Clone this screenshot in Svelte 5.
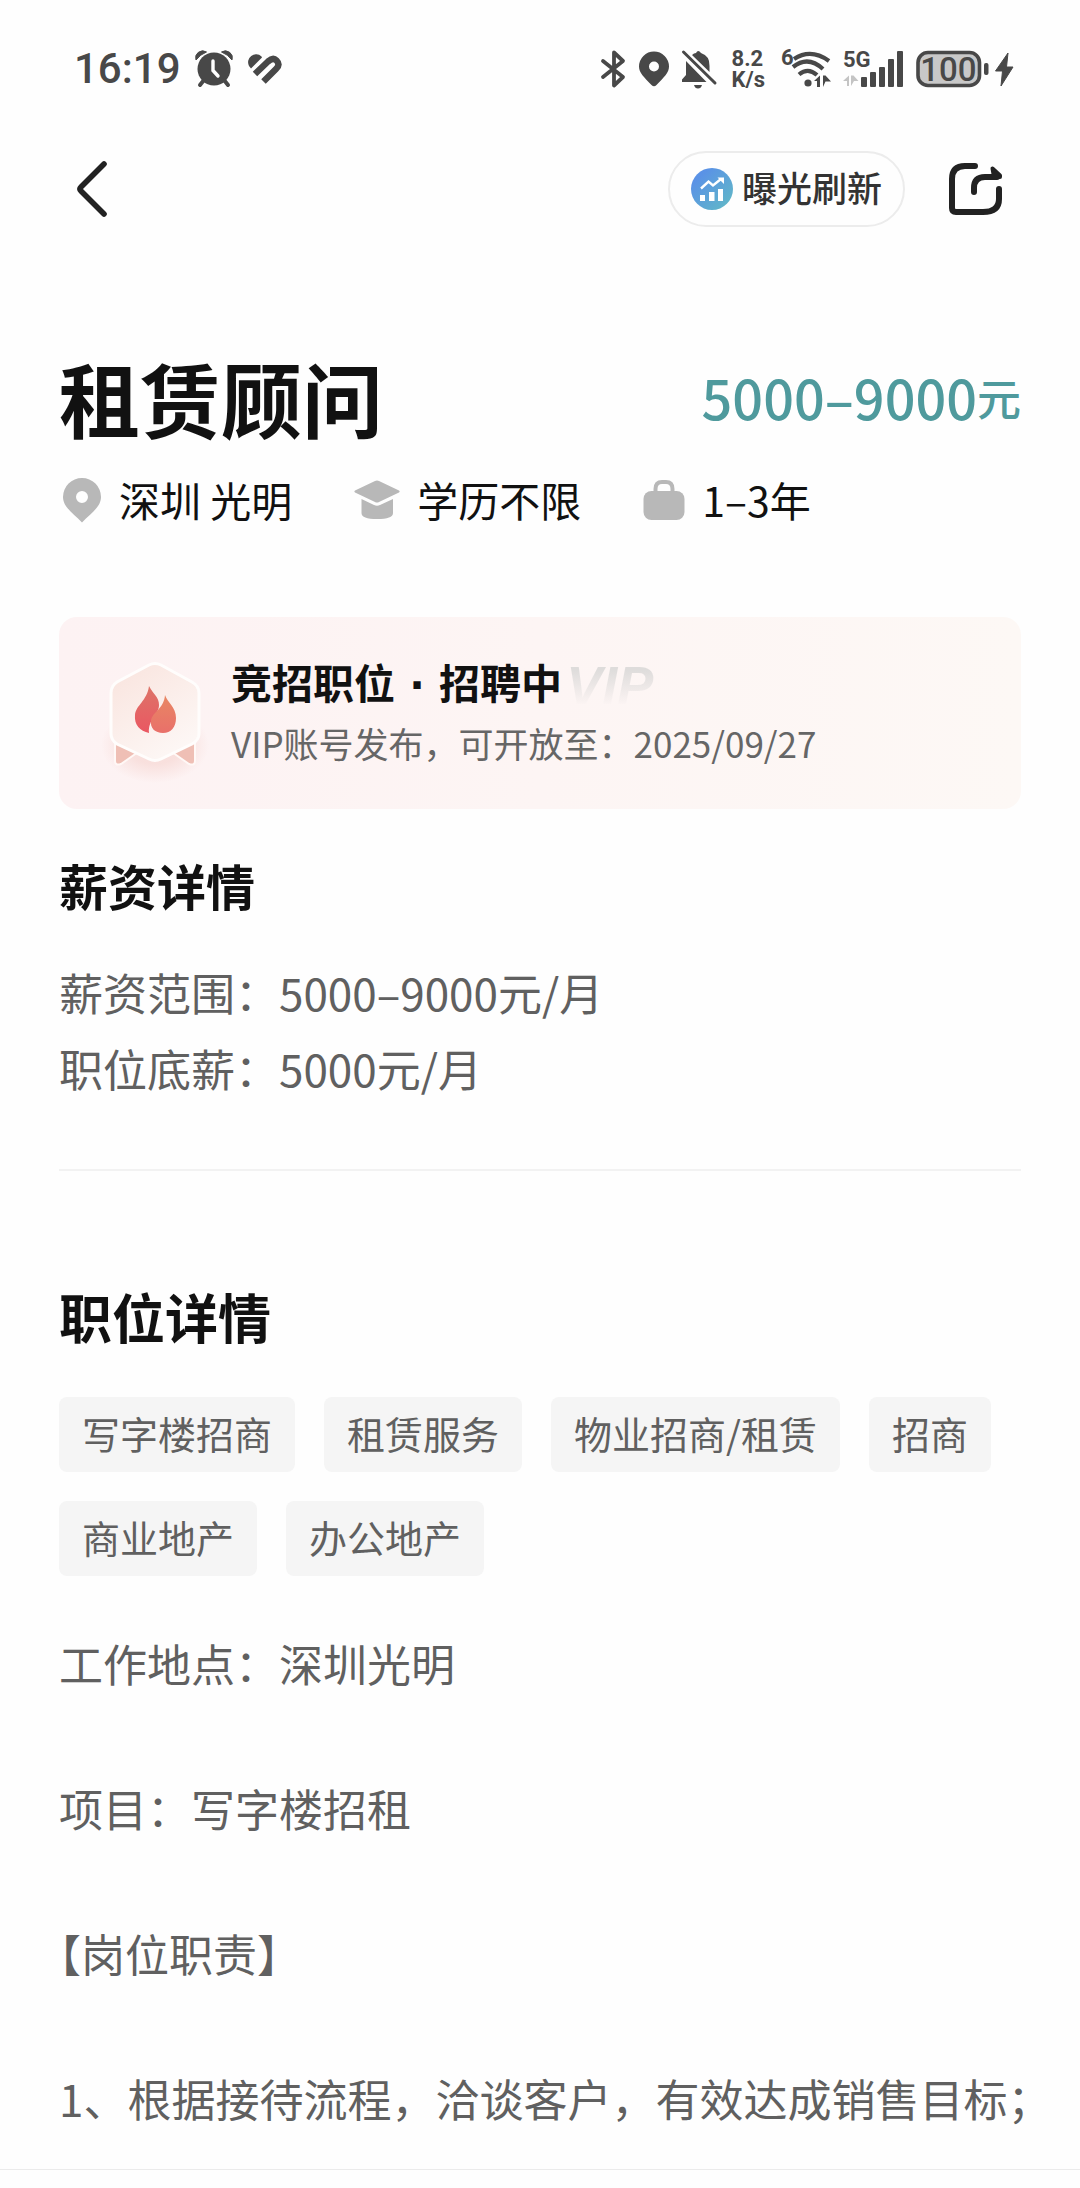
<script lang="ts">
  const job = {
    title: '租赁顾问',
    pay: '5000–9000',
    unit: '元',
    city: '深圳 光明',
    degree: '学历不限',
    years: '1–3年'
  };

  const salary = [
    { label: '薪资范围', value: '5000–9000元/月' },
    { label: '职位底薪', value: '5000元/月' }
  ];

  const tags = ['写字楼招商', '租赁服务', '物业招商/租赁', '招商', '商业地产', '办公地产'];

  const description = [
    '工作地点：深圳光明',
    '项目：写字楼招租',
    '【岗位职责】',
    '1、根据接待流程，洽谈客户，有效达成销售目标；'
  ];
</script>

<svelte:head>
  <title>租赁顾问</title>
</svelte:head>

<div class="page">
  <div class="status">
    <div class="status-left">
      <span class="clock">16:19</span>
      <svg width="36" height="36" viewBox="0 0 36 36" fill="currentColor">
        <path d="M0 9 A7 7 0 0 1 10.500 1 Q4 3.500 0 9Z M36 9 A7 7 0 0 0 25.500 1 Q32 3.500 36 9Z" stroke="currentColor" />
        <circle cx="18" cy="18" r="16.500" />
        <path d="M8 29 L4 34 M28 29 L32 34" stroke="currentColor" stroke-width="4" stroke-linecap="round" />
        <path d="M17 10 V19.500 L22 25" fill="none" stroke="#fff" stroke-width="3.400" stroke-linecap="round" />
      </svg>
      <svg width="36" height="30" viewBox="0 0 36 30" fill="none" stroke="currentColor">
        <path d="M14.500 2.400 A8 8 0 0 0 2 12 L4 14.500 L15 3.500Z" fill="currentColor" stroke="none" />
        <path d="M8 20 L21 7.500 Q26 3 29.500 6.500 Q33.500 10.500 29 15 L16.500 27.500" stroke-width="6.400" />
      </svg>
    </div>

    <div class="status-right">
      <svg width="26" height="38" viewBox="0 0 26 38" fill="none" stroke="currentColor" stroke-width="3.800" stroke-linejoin="round" stroke-linecap="round">
        <path d="M2 11 L22 27 L13 35.500 V2.500 L22 11 L2 27" />
      </svg>
      <svg width="30" height="36" viewBox="0 0 30 36">
        <path fill="currentColor" fill-rule="evenodd" d="M15 0.500 A15 15 0 0 1 30 15.500 C30 22 25 26 17.500 34 Q15 36.500 12.500 34 C5 26 0 22 0 15.500 A15 15 0 0 1 15 0.500Z M15 10.500 A5 5 0 1 0 15 20.500 A5 5 0 1 0 15 10.500Z" />
      </svg>
      <svg width="36" height="40" viewBox="0 0 36 40" fill="currentColor">
        <path d="M11 6 Q13 4 15 4 Q17 0 20 4 Q29 7 28.500 17 V23Z" />
        <path d="M5 12 L25.500 33 H1 V30.500 L5 26Z" />
        <path d="M13 36 H21 Q20 39.500 17 39.500 Q14 39.500 13 36Z" />
        <path d="M2.500 3 L34 34" stroke="currentColor" stroke-width="3" stroke-linecap="round" />
      </svg>
      <div class="speed"><span>8.2</span><span>K/s</span></div>
      <svg width="50" height="38" viewBox="0 0 50 38" fill="none" stroke="currentColor" stroke-width="4.200">
        <text x="0" y="15" class="mark">6</text>
        <path d="M13 9 Q30 -2 48 11" />
        <path d="M12 17 Q27 5 42 19" />
        <path d="M18 24.500 Q27 17 36 25" />
        <circle cx="27" cy="33" r="3.600" fill="currentColor" stroke="none" />
        <path d="M33 31 L39 25.500 V37 H36 V31Z M42 25.500 H44.500 L50 31.500 H44.500 L42 37Z" fill="currentColor" stroke="none" />
      </svg>
      <svg width="61" height="38" viewBox="0 0 61 38" fill="currentColor">
        <text x="0" y="17" class="mark">5G</text>
        <path fill="#c4c4c4" d="M0 31 L6 25.500 V36 H4 V31Z M8 25.500 H10.500 L15.500 31 H11 L8 36Z" />
        <rect x="18" y="27" width="6" height="10" rx="1" />
        <rect x="27" y="22" width="6" height="15" rx="1" />
        <rect x="36" y="17" width="6" height="20" rx="1" />
        <rect x="45" y="9" width="6" height="28" rx="1" />
        <rect x="54" y="1" width="6" height="36" rx="1" />
      </svg>
      <svg width="98" height="38" viewBox="0 0 98 38">
        <rect x="2" y="2.500" width="61.500" height="33" rx="10" fill="#c8c8c8" stroke="currentColor" stroke-width="3.600" />
        <text x="32.500" y="31" text-anchor="middle" class="level">100</text>
        <rect x="68" y="13" width="4.500" height="12" rx="2" fill="currentColor" />
        <path d="M92 3 L79.500 21 H86.500 L85 36 L97 17 H90.500Z" fill="currentColor" stroke="currentColor" stroke-linejoin="round" />
      </svg>
    </div>
  </div>

  <header class="toolbar">
    <button class="icon-button" aria-label="返回">
      <svg width="30" height="56" viewBox="0 0 30 56" fill="none" stroke="#222" stroke-width="5.600" stroke-linecap="round" stroke-linejoin="round">
        <path d="M27 3 L4 26 Q2 28 4 30 L27 53" />
      </svg>
    </button>
    <div class="actions">
      <button class="refresh">
        <svg width="42" height="42" viewBox="0 0 42 42">
          <defs>
            <linearGradient id="chart" x1="0" y1="0" x2="1" y2="1">
              <stop offset="0.200" stop-color="#5a92e6" />
              <stop offset="1" stop-color="#62bcc4" />
            </linearGradient>
          </defs>
          <circle cx="21" cy="21" r="21" fill="url(#chart)" />
          <path d="M10 20.500 L17.500 13.500 L22 17.500 L30 11" fill="none" stroke="#fff" stroke-width="2.400" />
          <path d="M26.500 9.500 H33 V16Z M9 27 H14 V33 H9Z M18 24 H23.500 V33 H18Z M27 21 H32 V33 H27Z" fill="#fff" />
        </svg>
        <span>曝光刷新</span>
      </button>
      <button class="icon-button" aria-label="分享">
        <svg width="56" height="54" viewBox="0 0 56 54" fill="none" stroke="#222" stroke-width="6" stroke-linecap="round" stroke-linejoin="round">
          <path d="M27 4 H17 Q4 4 4 17 V46 Q4 50 8 50 H35 Q51 50 51 37 V27" />
          <path d="M26 30 V26 Q26 15 37 15 H49" />
          <path d="M44.500 6.500 L52 13.500 V15 H46Z" fill="#222" stroke-width="4" />
        </svg>
      </button>
    </div>
  </header>

  <main>
    <div class="headline">
      <h1>{job.title}</h1>
      <p class="pay"><span>{job.pay}</span><span class="unit">{job.unit}</span></p>
    </div>

    <ul class="facts">
      <li>
        <svg width="40" height="46" viewBox="0 0 40 46">
          <path fill="#b8b8b8" fill-rule="evenodd" d="M20 1 A19 19 0 0 1 39 20 C39 30 29 36 20 45.500 C11 36 1 30 1 20 A19 19 0 0 1 20 1Z M20 14 A6 6 0 1 0 20 26 A6 6 0 1 0 20 14Z" />
        </svg>
        <span>{job.city}</span>
      </li>
      <li>
        <svg width="46" height="40" viewBox="0 0 46 40" fill="#b8b8b8">
          <path d="M21 1 Q23 0 25 1 L45 10.500 Q46.500 11.500 45 12.500 L25 22 Q23 23 21 22 L1 12.500 Q-0.500 11.500 1 10.500Z" />
          <path d="M7.500 19 L20 25 Q23 26.500 26 25 L39 19 V33 Q39 39 23 39 Q7.500 39 7.500 33Z" />
        </svg>
        <span>{job.degree}</span>
      </li>
      <li>
        <svg width="42" height="42" viewBox="0 0 42 42">
          <rect x="0.500" y="12" width="41" height="29" rx="8" fill="#b8b8b8" />
          <path d="M12.500 13 V10 Q12.500 3 19 3 H23 Q29.500 3 29.500 10 V13" fill="none" stroke="#b8b8b8" stroke-width="4" />
        </svg>
        <span>{job.years}</span>
      </li>
    </ul>

    <section class="card">
      <svg width="108" height="124" viewBox="0 0 108 124">
        <defs>
          <linearGradient id="shield" x1="0" y1="0" x2="0.600" y2="1">
            <stop offset="0" stop-color="#f9e3dd" />
            <stop offset="1" stop-color="#fdf7f5" />
          </linearGradient>
          <linearGradient id="flameBack" x1="0" y1="0" x2="0" y2="1">
            <stop offset="0" stop-color="#dd7468" />
            <stop offset="1" stop-color="#ea5762" />
          </linearGradient>
          <linearGradient id="flameFront" x1="0" y1="0" x2="0" y2="1">
            <stop offset="0" stop-color="#e88763" />
            <stop offset="1" stop-color="#e9706a" />
          </linearGradient>
          <radialGradient id="glow">
            <stop offset="0.500" stop-color="#f8dedb" stop-opacity="0.900" />
            <stop offset="1" stop-color="#f8dedb" stop-opacity="0" />
          </radialGradient>
        </defs>
        <ellipse cx="54" cy="86" rx="54" ry="38" fill="url(#glow)" />
        <path d="M14 80 V102 Q14 107 20 105 L40 91Z M94 80 V102 Q94 107 88 105 L68 91Z" fill="#efbfb5" stroke="#fff8f6" stroke-width="2" />
        <path d="M48 6 Q54 3 60 6 L91 23 Q98 27 98 34 V75 Q98 81 91 85 L60 100 Q54 103 48 100 L16 85 Q10 81 10 75 V34 Q10 27 16 23Z" fill="url(#shield)" stroke="#fffdfc" stroke-width="3" />
        <path d="M48 27 C52 35 58 38 58 46 C58 56 47 60 48 74 C39 72 33 66 34 56 C35 46 46 42 48 27Z" fill="url(#flameBack)" />
        <path d="M64 36 C66 43 75 48 75 59 C75 68 70 74 62 74 C54 74 49 69 50 62 C51 53 63 50 64 36Z" fill="url(#flameFront)" />
      </svg>
      <div class="card-text">
        <div class="card-title">
          <h2>竞招职位 · 招聘中</h2>
          <span class="vip">VIP</span>
        </div>
        <p>VIP账号发布，可开放至：2025/09/27</p>
      </div>
    </section>

    <section class="salary">
      <h2>薪资详情</h2>
      {#each salary as row}
        <p>{row.label}：{row.value}</p>
      {/each}
    </section>

    <section class="detail">
      <h2>职位详情</h2>
      <ul class="tags">
        {#each tags as tag}
          <li>{tag}</li>
        {/each}
      </ul>
      <div class="description">
        {#each description as line}
          <p>{line}</p>
        {/each}
      </div>
    </section>
  </main>

  <footer></footer>
</div>

<style>
  :global(body) {
    margin: 0;
    background: #fefefe;
  }

  .page {
    font-family: "Noto Sans CJK SC", "Noto Sans", sans-serif;
    color: #111;
  }

  h1,
  h2,
  p,
  ul {
    margin: 0;
    padding: 0;
  }

  ul {
    list-style: none;
  }

  svg {
    display: block;
    flex: none;
    overflow: visible;
  }

  button {
    font: inherit;
    color: inherit;
    background: none;
    border: 0;
    padding: 0;
  }

  .status {
    display: flex;
    justify-content: space-between;
    align-items: center;
    height: 40px;
    padding: 49px 66px 0 74px;
    color: #484848;
    font-family: Roboto, "Noto Sans", sans-serif;
  }

  .status-left,
  .status-right {
    display: flex;
    align-items: center;
  }

  .status-left {
    gap: 15px;
  }

  .status-right {
    gap: 12px;
  }

  .clock {
    font-size: 42px;
    line-height: 40px;
    font-weight: 500;
  }

  .speed {
    display: flex;
    flex-direction: column;
    font-size: 22px;
    line-height: 21px;
    font-weight: 700;
    margin: 0 4px 0 3px;
  }

  .mark {
    font-size: 22px;
    font-weight: 700;
    fill: currentColor;
    stroke: none;
  }

  .level {
    font-size: 33px;
    font-weight: 500;
    fill: currentColor;
  }

  .toolbar {
    display: flex;
    justify-content: space-between;
    align-items: center;
    margin-top: 62px;
    padding: 0 76px 0 77px;
  }

  .actions {
    display: flex;
    align-items: center;
    gap: 43px;
  }

  .refresh {
    display: flex;
    align-items: center;
    gap: 9px;
    box-sizing: border-box;
    height: 76px;
    padding: 0 21px;
    border: 2px solid #ececec;
    border-radius: 38px;
    font-size: 35px;
    line-height: 48px;
    font-weight: 500;
    color: #333;
  }

  .refresh span {
    padding-bottom: 4px;
  }

  main {
    padding: 122px 59px 0;
  }

  .headline {
    display: flex;
    justify-content: space-between;
    align-items: center;
  }

  h1 {
    font-size: 81px;
    line-height: 96px;
    font-weight: 700;
  }

  .pay {
    display: flex;
    align-items: center;
    color: #4f9a9d;
    font-size: 54px;
    line-height: 96px;
    font-weight: 500;
  }

  .unit {
    font-size: 44px;
  }

  .facts {
    display: flex;
    gap: 62px;
    margin-top: 26px;
    padding-left: 3px;
  }

  .facts li {
    display: flex;
    align-items: center;
    gap: 17px;
    font-size: 41px;
    line-height: 56px;
  }

  .facts span {
    padding-bottom: 2px;
  }

  .card {
    display: flex;
    align-items: flex-start;
    gap: 22px;
    box-sizing: border-box;
    margin-top: 88px;
    padding: 42px 42px 26px;
    border-radius: 18px;
    background: linear-gradient(90deg, #fdf2f3, #fdf5f4 50%, #fdf8f5);
  }

  .card-title {
    display: flex;
    align-items: center;
    gap: 4px;
    line-height: 52px;
  }

  /* narrower middle dot than the full-width one */
  .card h2 {
    font-family: "DejaVu Sans", "Noto Sans CJK SC", sans-serif;
    font-size: 41px;
    line-height: 52px;
  }

  .vip {
    font-family: "Liberation Sans", sans-serif;
    font-size: 54px;
    font-weight: 700;
    font-style: italic;
    background: linear-gradient(#dedcdb 20%, #fdf5f4 90%);
    background-clip: text;
    color: transparent;
    padding-right: 8px;
  }

  .card p {
    margin-top: 6px;
    font-size: 35px;
    line-height: 52px;
    color: #666;
  }

  .salary {
    margin-top: 46px;
    padding-bottom: 63px;
    border-bottom: 2px solid #f2f2f2;
  }

  .salary h2 {
    margin-bottom: 39px;
    font-size: 49px;
    line-height: 60px;
  }

  .salary p {
    font-size: 44px;
    line-height: 76px;
    color: #606060;
  }

  .detail {
    padding-top: 115px;
  }

  .detail h2 {
    font-size: 53px;
    line-height: 60px;
  }

  .tags {
    display: flex;
    flex-wrap: wrap;
    gap: 29px;
    margin-top: 51px;
  }

  .tags li {
    padding: 0 23px 3px;
    border-radius: 8px;
    background: #f5f5f5;
    font-size: 38px;
    line-height: 72px;
    color: #606060;
  }

  /* closing punctuation may hang into the page margin */
  .description {
    display: flex;
    flex-direction: column;
    gap: 72px;
    margin: 51px -32px 0 0;
    font-size: 44px;
    line-height: 73px;
    color: #606060;
    text-spacing-trim: trim-start;
  }

  footer {
    height: 17px;
    margin-top: 34px;
    border-top: 1px solid #ebebeb;
  }
</style>
